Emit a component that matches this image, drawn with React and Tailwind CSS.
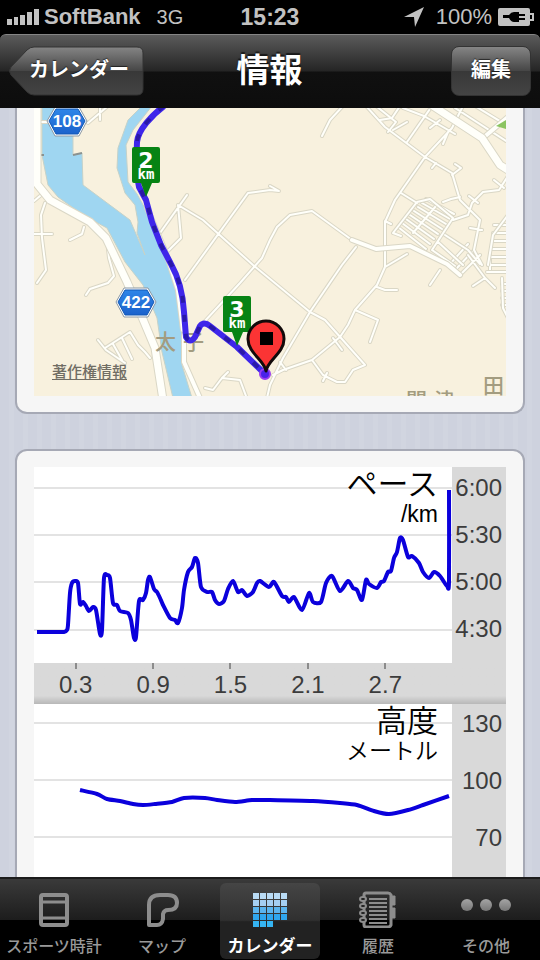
import { useState } from 'react';
import clsx from 'clsx';

const WIDE_ROADS = [
  'M37 104V184L50 200L90 222L106 238L127 282L142 317L155 348L163 400',
  'M433 106L482 138L500 165L508 170',
];

const MEDIUM_ROADS = [
  'M483 138L508 117',
  'M184 335V362L200 398',
  'M147 208L166 253L178 290L183 330',
  'M352 240L376 249L410 246L447 264L460 275',
];

const ROADS = [
  'M88 123L108 106M100 106V120M37 122H50',
  'M34 201L40 196M45 203L41 215L42 238L46 270L37 283M34 234H52',
  'M70 240L82 234L84 227M107 240L109 258L114 276L108 283L90 289L86 295',
  'M98 340L106 350L125 363M105 348L130 332L138 345L145 352L150 358M113 344L122 360M122 338L132 359',
  'M160 233L187 195M178 205L181 238L167 252M178 205L203 220L253 265L310 312L325 320L365 365L353 370L345 382L337 382L323 375L312 360',
  'M185 280L248 193L270 190L279 191L270 186',
  'M204 322L240 283L262 258L270 240L277 227L290 215L312 211L352 240',
  'M356 247L342 265L310 312L283 358L270 385L267 398',
  'M463 106L452 128L425 157L395 200L385 222V267L377 285L355 310L348 325L340 337L312 360L283 370L273 375',
  'M280 362L286 370M327 373L323 381',
  'M385 267L407 254M377 287L385 290H397M355 310L378 320L370 342M333 338L342 350M440 270L430 285',
  'M366 106L385 127L425 157L452 173L460 200L480 220L474 250L482 265',
  'M376 106L396 122L388 132M380 120L392 118L400 106M393 130L407 122M407 142L432 106M403 108L424 116L455 134',
  'M432 168L436 163M452 175L461 168L455 164M443 202L451 199L460 197M401 193L417 203M385 221L391 224',
  'M322 136L330 120L343 106',
  'M393 233L417 202L430 199L453 218L432 250M393 233L401 236',
  'M508 176L499 190L483 192L472 203L468 215L453 220M469 196L478 203M494 180L504 188',
  'M470 228L482 230M445 235L468 250L480 264M432 250L455 266M438 242L463 265',
  'M468 255L485 278L495 288M485 278L473 286M480 255L460 275M487 272H508M502 278L503 308L508 318',
  'M488 265L493 235L508 215',
  'M455 108L506 141M475 106L508 126M430 128L440 120M448 132L443 144',
  'M205 388L213 390L222 378L240 380L246 396M222 378L228 372',
];

// dense housing blocks drawn as evenly spaced lanes
const LANES = [
  ...[0, 1, 2, 3, 4, 5, 6, 7].map((i) => `M${398 + i * 4} ${227 - i * 4}L${426 + i * 4} ${249 - i * 5}`),
  ...[0, 1, 2, 3, 4, 5].map((i) => `M${494 - i} ${225 + i * 8}H508`),
  ...[0, 1, 2, 3].map((i) => `M502 ${284 + i * 7}H508`),
  'M413 233L436 206M450 264L468 244M457 268L474 250M490 255V272',
];

const ROUTE =
  'M164 106C152 115 138 130 137 142L136 170L139 187L146 200L152 222L161 245L171 264C180 280 183 295 184 312L186 337Q190 344 195 337L200 326Q204 321 210 326L237 347L265 374';

const PACE = [
  [37, 632], [52, 632], [64, 632], [67, 630], [68, 625], [70, 593], [72, 583], [75, 581], [78, 583], [80, 604],
  [83, 602], [86, 606], [89, 611], [93, 607], [96, 610], [100, 634], [102, 630], [104, 578], [107, 575], [110, 578],
  [113, 603], [117, 605], [120, 611], [128, 613], [131, 620], [134, 638], [136, 637], [139, 601], [143, 600],
  [146, 593], [148, 580], [150, 577], [154, 589], [157, 592], [160, 598], [163, 605], [170, 618], [175, 620],
  [178, 623], [182, 608], [184, 590], [188, 572], [192, 567], [195, 558], [198, 563], [201, 587], [207, 592],
  [212, 592], [215, 600], [219, 604], [224, 601], [228, 589], [233, 581], [238, 592], [242, 590], [247, 596],
  [253, 592], [257, 583], [260, 581], [269, 587], [274, 582], [282, 596], [286, 597], [289, 602], [294, 597],
  [302, 610], [309, 593], [313, 602], [321, 602], [326, 583], [332, 576], [340, 591], [348, 581], [353, 588],
  [357, 590], [362, 600], [366, 580], [369, 584], [377, 588], [381, 582], [384, 581], [388, 572], [391, 571],
  [394, 558], [397, 552], [400, 538], [403, 540], [408, 557], [412, 556], [419, 563], [423, 572], [429, 578],
  [434, 572], [440, 576], [447, 586], [449, 582], [449, 490],
];

const ALTITUDE = [
  [80, 790], [97, 794], [107, 799], [120, 801], [133, 804], [143, 805], [155, 804], [172, 802], [184, 798], [205, 798],
  [217, 800], [235, 802], [252, 800], [270, 800], [313, 801], [340, 803], [357, 805], [374, 811], [389, 814], [408, 810],
  [423, 805], [449, 796],
];

function smoothPath(points) {
  let d = `M${points[0][0]} ${points[0][1]}`;
  for (let i = 0; i < points.length - 1; i++) {
    const p0 = points[i - 1] || points[i];
    const p1 = points[i];
    const p2 = points[i + 1];
    const p3 = points[i + 2] || p2;
    const k = 8;
    d += `C${p1[0] + (p2[0] - p0[0]) / k} ${p1[1] + (p2[1] - p0[1]) / k} ${p2[0] - (p3[0] - p1[0]) / k} ${p2[1] - (p3[1] - p1[1]) / k} ${p2[0]} ${p2[1]}`;
  }
  return d;
}

function Roads({ paths, width }) {
  const d = paths.join('');
  return (
    <g fill="none" strokeLinejoin="round" strokeLinecap="round">
      <path d={d} stroke="#dad7c6" strokeWidth={width + 2} />
      <path d={d} stroke="#fffffa" strokeWidth={width} />
    </g>
  );
}

function RouteShield({ x, y, number }) {
  return (
    <g transform={`translate(${x} ${y})`}>
      <path d="M-12 -14H12L20 0L12 15H-12L-20 0Z" fill="#fff" stroke="#8b98a5" strokeWidth="1" strokeLinejoin="round" />
      <path d="M-11 -12H11L18 0L11 13H-11L-18 0Z" fill="url(#shield)" stroke="#1259b5" strokeWidth="1" strokeLinejoin="round" />
      <text y="6" textAnchor="middle" fontSize="17" fontWeight="bold" fill="#fff">{number}</text>
    </g>
  );
}

function KmMarker({ x, y, km }) {
  return (
    <g transform={`translate(${x} ${y})`}>
      <path d="M-12 -50H12Q14 -50 14 -48V-16Q14 -14 12 -14H6L0 0L-5 -14H-12Q-14 -14 -14 -16V-48Q-14 -50 -12 -50Z" fill="#078314" />
      <g fill="#fff" fontWeight="bold" textAnchor="middle" fontFamily="DejaVu Sans">
        <text y="-29" fontSize="22">{km}</text>
        <text y="-18" fontSize="14" fontFamily="DejaVu Sans Mono, monospace">km</text>
      </g>
    </g>
  );
}

function RouteMap() {
  return (
    <div className="relative">
      <svg viewBox="34 108 472 288" className="block w-full h-auto" fontFamily="Liberation Sans, Noto Sans CJK JP, sans-serif">
        <defs>
          <linearGradient id="shield" x1="0" y1="0" x2="0" y2="1">
            <stop offset="0" stopColor="#2f86e8" />
            <stop offset="1" stopColor="#1b62cc" />
          </linearGradient>
        </defs>
        <rect x="34" y="108" width="472" height="288" fill="#f8f1de" />
        <path
          d="M42 106V155L48 185L58 197L83 215L107 228L125 262L143 285L157 318L162 352L173 398H192L182 365L181 305L173 272L164 250L147 212L137 194L128 182L126 145L133 130L152 106H142L128 120L118 148L117 168L125 193L135 205L138 222L137 233L145 255L130 220L83 185L82 153L73 155V106Z"
          fill="#9fd6f1"
          stroke="#c5d2c9"
          strokeWidth="1"
        />
        <path d="M73 155L82 153M41 155H44" stroke="#8b9290" strokeWidth="2" />
        <Roads paths={LANES} width={2} />
        <Roads paths={ROADS} width={2} />
        <Roads paths={MEDIUM_ROADS} width={4} />
        <Roads paths={WIDE_ROADS} width={7} />
        <path d="M496 126L506 120V129Z" fill="#8bc461" />
        <g fontSize="21" fontWeight="500" fill="#a39c80">
          <text x="155" y="349">太</text>
          <text x="183" y="349">子</text>
          <text x="406" y="408">関</text>
          <text x="434" y="408">津</text>
          <text x="483" y="393">田</text>
        </g>
        <path d={ROUTE} fill="none" stroke="#3f26ea" strokeWidth="6" strokeLinejoin="round" />
        <path d={ROUTE} fill="none" stroke="#2a19a8" strokeWidth="4" strokeDasharray="7 12" />
        <circle cx="265" cy="374" r="5" fill="#4a22e8" stroke="#9a3bf0" strokeWidth="2" />
        <RouteShield x={67} y={121} number="108" />
        <RouteShield x={136} y={302} number="422" />
        <KmMarker x={146} y={197} km="2" />
        <KmMarker x={237} y={346} km="3" />
        <path
          d="M266 371C264 360 248 353 248 339A18 18 0 0 1 284 339C284 353 268 360 266 371Z"
          fill="#fb3434"
          stroke="#120a0a"
          strokeWidth="3"
          strokeLinejoin="round"
        />
        <rect x="260" y="332" width="13" height="13" fill="#000" />
      </svg>
      <a href="#copyright" className="absolute left-[18px] bottom-3 text-[15px] leading-6 font-medium text-[#706d64] underline underline-offset-2">
        著作権情報
      </a>
    </div>
  );
}

function Plot({ viewBox, lines, points, title, unit, className }) {
  const [x, , w] = viewBox.split(' ').map(Number);
  return (
    <div className={clsx('relative bg-white', className)}>
      <svg viewBox={viewBox} preserveAspectRatio="none" className="block w-full h-full">
        {lines.map((y) => (
          <path key={y} d={`M${x} ${y}H${x + w}`} stroke="#e3e3e3" strokeWidth="2" />
        ))}
        <path d={smoothPath(points)} fill="none" stroke="#0b00dc" strokeWidth="4" strokeLinejoin="round" />
      </svg>
      <h2 className="absolute top-0 right-[14px] text-right font-[350] text-black">
        <span className="block text-[31px] leading-[35px]">{title}</span>
        <span className="block text-[23px] leading-6">{unit}</span>
      </h2>
    </div>
  );
}

function YAxis({ labels, className }) {
  return (
    <div className={clsx('flex flex-col bg-[#d9d9d9] pr-1 text-right text-2xl leading-7 text-[#3c3c3c]', className)}>
      {labels.map((label) => (
        <span key={label}>{label}</span>
      ))}
    </div>
  );
}

function Charts() {
  return (
    <>
      <div className="grid grid-cols-[1fr_54px]">
        <Plot
          viewBox="34 467 418 196"
          className="h-[196px]"
          lines={[488, 535, 582, 630]}
          points={PACE}
          title="ペース"
          unit="/km"
        />
        <YAxis labels={['6:00', '5:30', '5:00', '4:30']} className="gap-[19px] pt-[7px]" />
      </div>
      <div className="grid grid-cols-[1fr_54px] h-[41px] bg-linear-to-b from-[#d9d9d9] from-80% to-[#b8b8b8]">
        <div className="grid grid-cols-5 pl-[3px] pr-7">
          {['0.3', '0.9', '1.5', '2.1', '2.7'].map((km) => (
            <div key={km} className="flex flex-col items-center">
              <span className="w-[2px] h-[6px] bg-[#8c8c8c]" />
              <span className="text-2xl leading-8 text-[#3c3c3c]">{km}</span>
            </div>
          ))}
        </div>
      </div>
      <div className="grid grid-cols-[1fr_54px]">
        <Plot
          viewBox="34 704 418 196"
          className="h-[196px]"
          lines={[723, 780, 837, 894]}
          points={ALTITUDE}
          title="高度"
          unit="メートル"
        />
        <YAxis labels={['130', '100', '70']} className="gap-[29px] pt-[6px]" />
      </div>
    </>
  );
}

function StatusBar() {
  return (
    <div className="grid grid-cols-[1fr_auto_1fr] items-center h-[34px] shrink-0 bg-black px-[6px] text-[22px] leading-[34px] text-[#c2c2c2]">
      <div className="flex items-center">
        <svg width="34" height="18" viewBox="0 0 34 18" fill="#c2c2c2">
          <path d="M1 11H6V17H1ZM8 9H12V17H8ZM14 7H19V17H14ZM21 4H26V17H21ZM28 1H33V17H28Z" />
        </svg>
        <span className="ml-1 font-bold">SoftBank</span>
        <span className="ml-4 text-xl leading-[34px]">3G</span>
      </div>
      <span className="text-[23px] font-bold">15:23</span>
      <div className="flex items-center justify-end">
        <svg width="20" height="20" viewBox="0 0 20 20" fill="#c2c2c2">
          <path d="M20 0L11 20L10 10L0 10Z" />
        </svg>
        <span className="ml-3">100%</span>
        <svg width="36" height="18" viewBox="0 0 36 18" className="ml-[6px]">
          <path d="M2 0H30Q32 0 32 2V5H36V13H32V16Q32 18 30 18H2Q0 18 0 16V2Q0 0 2 0Z" fill="#c2c2c2" />
          <path d="M5 7H11Q13 4 16 4H21V6H27V8H21V10H27V12H21V14H16Q13 14 11 10H5Z" fill="#000" />
          <path d="M33 7V11" stroke="#000" strokeWidth="2" />
        </svg>
      </div>
    </div>
  );
}

function NavBar() {
  return (
    <header className="bg-black shrink-0">
      <div className="grid grid-cols-[1fr_auto_1fr] items-center h-[74px] pl-2 pr-[9px] pb-[2px] rounded-t-md border-t border-[#858585] bg-[linear-gradient(#5b5b5b,#252525_49%,#101010_51%,#0d0d0d)] text-white">
        <button className="relative justify-self-start w-[136px] h-[50px] pl-[6px] pb-[2px] text-xl font-bold cursor-pointer text-shadow-[0_-1px_1px_#0009]">
          <svg viewBox="0 0 136 50" className="absolute inset-0 w-full h-full">
            <defs>
              <linearGradient id="back" x1="0" y1="0" x2="0" y2="1">
                <stop offset="0" stopColor="#858585" />
                <stop offset="0.49" stopColor="#474747" />
                <stop offset="0.51" stopColor="#383838" />
                <stop offset="1" stopColor="#444" />
              </linearGradient>
            </defs>
            <path
              d="M26 1H129Q135 1 135 7V43Q135 49 129 49H26Q22 49 19 46L3 29Q0 25 3 21L19 4Q22 1 26 1Z"
              fill="url(#back)"
              stroke="#333"
              strokeWidth="1"
            />
          </svg>
          <span className="relative">カレンダー</span>
        </button>
        <h1 className="text-[33px] font-bold leading-10 text-shadow-[0_-2px_1px_#0009]">情報</h1>
        <button className="justify-self-end w-20 h-[50px] pb-[2px] rounded-lg border border-[#333] bg-[linear-gradient(#858585,#474747_49%,#383838_51%,#444)] text-xl font-bold cursor-pointer text-shadow-[0_-1px_1px_#0009]">
          編集
        </button>
      </div>
    </header>
  );
}

const CALENDAR_ROWS = ['#b9dbf5', '#a6cff2', '#5bb4ee', '#2fa6ee', '#35b4f2'];

function TabIcon({ name }) {
  return (
    <svg width="38" height="38" viewBox="0 0 38 38" fill="none" stroke="#8d8d8d">
      {name === 'watch' && (
        <>
          <rect x="6" y="5" width="26" height="30" rx="2" strokeWidth="4" />
          <path d="M6 12H32M6 28H32" strokeWidth="3" />
        </>
      )}
      {name === 'map' && (
        <path
          d="M6 35V15Q6 5 17 5H25Q34 5 34 13Q34 20 25 20Q21 20 20 24V29Q19 35 14 35Z"
          strokeWidth="4"
          strokeLinejoin="round"
        />
      )}
      {name === 'calendar' &&
        CALENDAR_ROWS.map((color, row) =>
          [0, 1, 2, 3, 4].map((col) =>
            row === 4 && col > 2 ? null : (
              <rect key={`${row}-${col}`} x={2 + col * 7} y={3 + row * 7} width="6" height="6" fill={color} stroke="none" />
            ),
          ),
        )}
      {name === 'history' && (
        <>
          <path d="M7 3H29Q31 3 32 5V35Q31 37 29 37H7Q5 37 5 35V5Q5 3 7 3Z" strokeWidth="3" />
          <path d="M10 9H28M10 13H28M10 17H28M10 21H28M10 25H28M10 29H28M10 33H28" strokeWidth="2" />
          <path d="M33 6H36V15H33ZM33 18H36V28H33Z" fill="#8d8d8d" strokeWidth="1" />
          {[9, 16, 23, 30].map((y) => (
            <ellipse key={y} cx="4" cy={y} rx="3" ry="2" strokeWidth="2" fill="#1d1d1d" />
          ))}
        </>
      )}
    </svg>
  );
}

const TABS = [
  { id: 'watch', label: 'スポーツ時計' },
  { id: 'map', label: 'マップ' },
  { id: 'calendar', label: 'カレンダー' },
  { id: 'history', label: '履歴' },
  { id: 'more', label: 'その他' },
];

function TabBar() {
  const [active, setActive] = useState('calendar');

  return (
    <nav className="grid grid-cols-5 h-[83px] shrink-0 pt-1 pb-1 border-t-2 border-[#1c1c1c] bg-[linear-gradient(#3a3a3a,#1d1d1d_50%,#000_51%)]">
      {TABS.map(({ id, label }) => (
        <button
          key={id}
          onClick={() => setActive(id)}
          className={clsx(
            'flex flex-col items-center mx-1 pt-[7px] rounded-md whitespace-nowrap cursor-pointer',
            active === id
              ? 'bg-[linear-gradient(#454545,#303030_49%,#222_51%)] text-[17px] font-bold text-white'
              : 'text-base font-medium text-[#9a9a9a]',
          )}
        >
          {id === 'more' ? (
            <span className="flex items-center gap-[7px] h-[38px] pb-2">
              {[0, 1, 2].map((i) => (
                <span key={i} className="size-3 rounded-full bg-linear-to-b from-[#a5a5a5] to-[#777]" />
              ))}
            </span>
          ) : (
            <TabIcon name={id} />
          )}
          <span className="leading-6 mt-[7px]">{label}</span>
        </button>
      ))}
    </nav>
  );
}

export default function App() {
  return (
    <div className="flex flex-col h-screen overflow-hidden font-['Liberation_Sans','Noto_Sans_CJK_JP',sans-serif]">
      <StatusBar />
      <NavBar />
      <main className="flex-1 min-h-0 overflow-y-auto [scrollbar-width:none] px-[15px] bg-[repeating-linear-gradient(90deg,#ced2de_0_9px,#d1d5e0_9px_14px)]">
        <section className="px-[17px] pb-4 rounded-b-xl border-2 border-t-0 border-[#a6a9b5] bg-[#f6f6f6]">
          <RouteMap />
        </section>
        <section className="mt-[35px] px-[17px] pt-4 pb-4 rounded-xl border-2 border-[#a6a9b5] bg-[#f6f6f6]">
          <Charts />
        </section>
      </main>
      <TabBar />
    </div>
  );
}
